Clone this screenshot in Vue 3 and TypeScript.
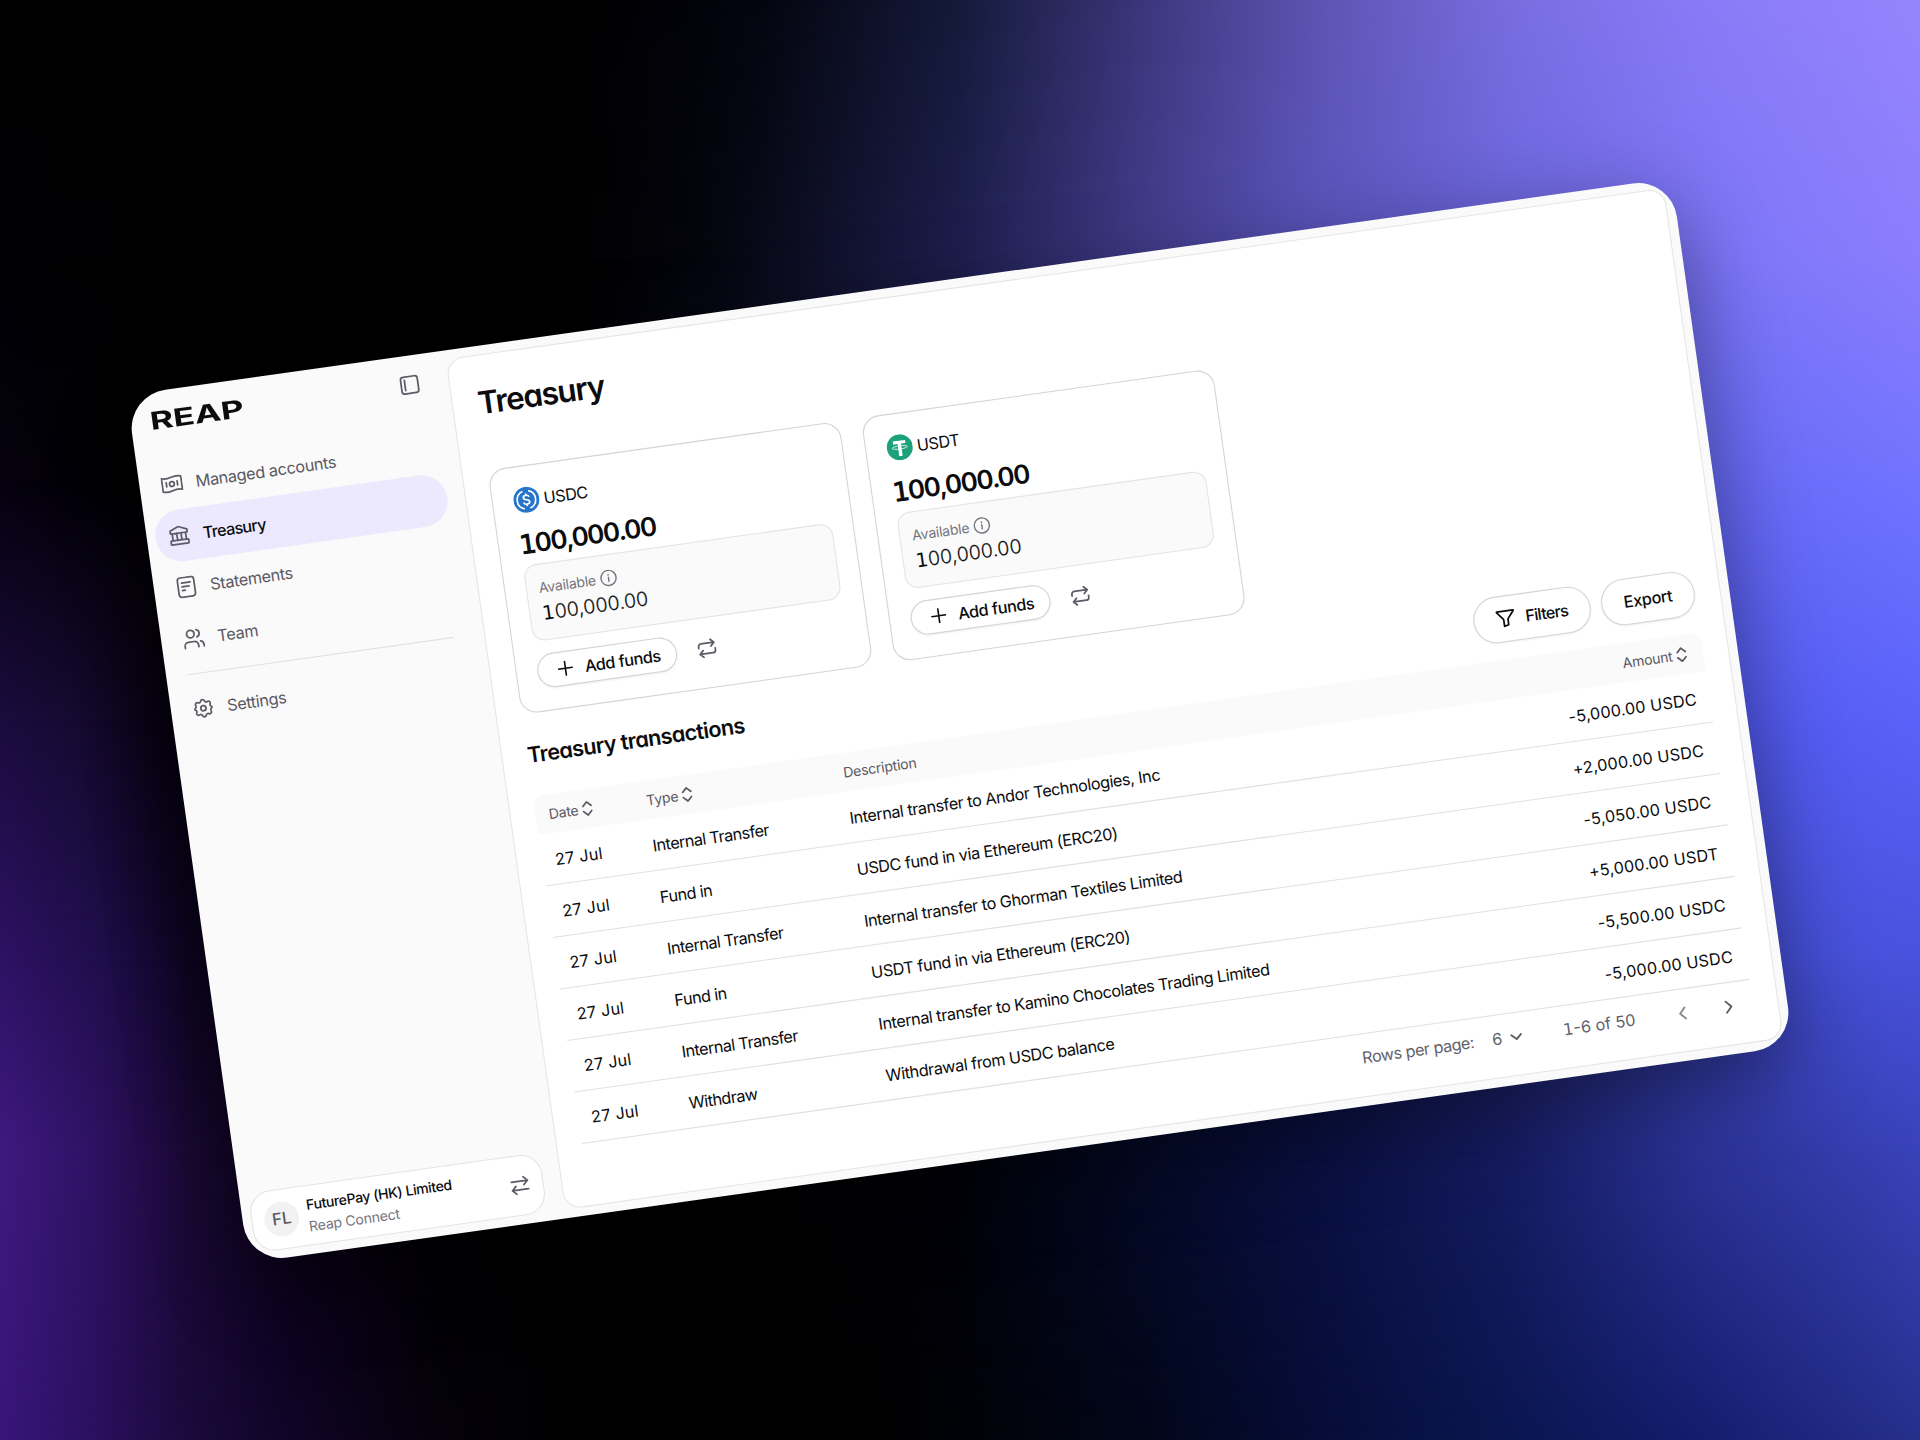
<script setup lang="ts">
interface NavItem {
  label: string
  icon: 'accounts' | 'treasury' | 'statements' | 'team'
  active?: boolean
}

interface Balance {
  code: 'USDC' | 'USDT'
  lead: string
  rest: string
}

interface Transaction {
  date: string
  type: string
  description: string
  amount: string
}

const navItems: NavItem[] = [
  { label: 'Managed accounts', icon: 'accounts' },
  { label: 'Treasury', icon: 'treasury', active: true },
  { label: 'Statements', icon: 'statements' },
  { label: 'Team', icon: 'team' },
]

const balances: Balance[] = [
  { code: 'USDC', lead: '1', rest: '00,000.00' },
  { code: 'USDT', lead: '1', rest: '00,000.00' },
]

const transactions: Transaction[] = [
  { date: '27 Jul', type: 'Internal Transfer', description: 'Internal transfer to Andor Technologies, Inc', amount: '-5,000.00 USDC' },
  { date: '27 Jul', type: 'Fund in', description: 'USDC fund in via Ethereum (ERC20)', amount: '+2,000.00 USDC' },
  { date: '27 Jul', type: 'Internal Transfer', description: 'Internal transfer to Ghorman Textiles Limited', amount: '-5,050.00 USDC' },
  { date: '27 Jul', type: 'Fund in', description: 'USDT fund in via Ethereum (ERC20)', amount: '+5,000.00 USDT' },
  { date: '27 Jul', type: 'Internal Transfer', description: 'Internal transfer to Kamino Chocolates Trading Limited', amount: '-5,500.00 USDC' },
  { date: '27 Jul', type: 'Withdraw', description: 'Withdrawal from USDC balance', amount: '-5,000.00 USDC' },
]
</script>

<template>
  <div class="stage">
    <div class="glow glow-1"></div>
    <div class="glow glow-2"></div>
    <div class="glow glow-3"></div>
    <div class="glow glow-4"></div>
    <div class="glow glow-5"></div>
    <div class="glow glow-6"></div>
    <div class="glow glow-7"></div>

    <div class="window">
      <aside class="sidebar">
        <header class="brand">
          <span class="logo">REAP</span>
          <svg class="icon collapse" viewBox="0 0 20 20">
            <rect x="2.2" y="2.2" width="15.6" height="15.6" rx="2.6" />
            <path d="M5.7 5.2v9.6" />
          </svg>
        </header>

        <nav class="nav">
          <a v-for="item in navItems" :key="item.label" class="nav-item" :class="{ active: item.active }">
            <svg v-if="item.icon === 'accounts'" class="icon" viewBox="0 0 20 20">
              <path d="M1 3.900c3 1.200 6 .8 9-.1s6-1.300 9-.1v12.500c-3-1.200-6-.8-9 .1s-6 1.300-9 .1z" />
              <circle cx="10" cy="10" r="2.200" />
              <path d="M4.900 8.300v3.800M15.100 7.900v3.800" />
            </svg>
            <svg v-else-if="item.icon === 'treasury'" class="icon" viewBox="0 0 20 20">
              <path d="M2.200 5 9.300 2q.7-.2 1.400 0l7.100 3v2.200q0 .6-.6.6H2.800q-.6 0-.6-.6zM3.800 7.800v6.400M8 7.800v6.400M12 7.800v6.400M16.200 7.800v6.400M2.400 14.200h15.200q.6 0 .6.6v2.600q0 .6-.6.6H2.400q-.6 0-.6-.6v-2.600q0-.6.6-.6z" />
            </svg>
            <svg v-else-if="item.icon === 'statements'" class="icon" viewBox="0 0 20 20">
              <rect x="2.400" y="1" width="15.200" height="18" rx="2.800" />
              <path d="M6 5.800h8M6 9.300h6.500M6 12.800h2.600" />
            </svg>
            <svg v-else class="icon" viewBox="0 0 20 20">
              <circle cx="7.500" cy="5.600" r="3.500" />
              <path d="M1.200 18.200v-1.700a3.600 3.600 0 0 1 3.600-3.600h5.400a3.600 3.600 0 0 1 3.600 3.600v1.700M13.200 2.300a3.500 3.500 0 0 1 0 6.700M16 13.100a3.600 3.600 0 0 1 2.800 3.500v1.600" />
            </svg>
            <span>{{ item.label }}</span>
          </a>
          <hr class="divider" />
          <a class="nav-item">
            <svg class="icon" viewBox="0 0 20 20">
              <path d="M8.300 3.300a1.760 1.760 0 0 1 3.400 0 1.760 1.760 0 0 0 2.600 1.100 1.760 1.760 0 0 1 2.400 2.400 1.760 1.760 0 0 0 1.100 2.600 0 0 0 0 1 0 1.300 1.760 1.760 0 0 0-1.100 2.600 1.760 1.760 0 0 1-2.400 2.400 1.760 1.760 0 0 0-2.600 1.100 1.760 1.760 0 0 1-3.400 0 1.760 1.760 0 0 0-2.600-1.100 1.760 1.760 0 0 1-2.400-2.400 1.760 1.760 0 0 0-1.100-2.600V9.400a1.760 1.760 0 0 0 1.100-2.600 1.760 1.760 0 0 1 2.400-2.400 1.760 1.760 0 0 0 2.600-1.100z" />
              <circle cx="10" cy="10" r="2.400" />
            </svg>
            <span>Settings</span>
          </a>
        </nav>

        <div class="account">
          <span class="avatar">FL</span>
          <div class="account-text">
            <span class="account-name">FuturePay (HK) Limited</span>
            <span class="account-sub">Reap Connect</span>
          </div>
          <svg class="icon swap" viewBox="0 0 20 20">
            <path d="M2.500 6h15M13.800 2.300 17.500 6l-3.700 3.700M17.500 14h-15M6.200 10.300 2.500 14l3.700 3.700" />
          </svg>
        </div>
      </aside>

      <main class="content">
        <h1 class="title">Treasury</h1>

        <section class="cards">
          <article v-for="b in balances" :key="b.code" class="card">
            <div class="coin-row">
              <svg v-if="b.code === 'USDC'" class="coin" viewBox="0 0 24 24">
                <circle cx="12" cy="12" r="12" fill="#2775ca" />
                <path d="M9.400 3.900a8.500 8.500 0 0 0 0 16.200M14.600 3.900a8.500 8.500 0 0 1 0 16.200" fill="none" stroke="#fff" stroke-width="1.500" />
                <path d="M14.700 9.700c-.2-1.200-1.200-1.800-2.700-1.800-1.600 0-2.600.8-2.600 1.900 0 2.900 5.400 1.400 5.400 4.300 0 1.200-1.100 2-2.800 2-1.600 0-2.700-.7-2.900-2M12 6v1.900M12 16.100V18" fill="none" stroke="#fff" stroke-width="1.500" />
              </svg>
              <svg v-else class="coin" viewBox="0 0 24 24">
                <circle cx="12" cy="12" r="12" fill="#1ba27a" />
                <path d="M6.300 5.900h11.400v2.900h-4.100v11.300h-3.200V8.800H6.300z" fill="#fff" />
                <ellipse cx="12" cy="12.100" rx="7.100" ry="1.500" fill="none" stroke="#fff" stroke-width=".7" />
              </svg>
              <span class="coin-code">{{ b.code }}</span>
            </div>
            <div class="total"><span class="slab">{{ b.lead }}</span>{{ b.rest }}</div>
            <div class="available">
              <div class="available-label">
                <span>Available</span>
                <svg class="info" viewBox="0 0 16 16">
                  <circle cx="8" cy="8" r="7" />
                  <path d="M8 7.400v3.800M8 4.800v.5" />
                </svg>
              </div>
              <div class="available-value"><span class="slab">{{ b.lead }}</span>{{ b.rest }}</div>
            </div>
            <div class="actions">
              <button class="pill add">
                <svg class="plus" viewBox="0 0 14 14"><path d="M7 .5v13M.5 7h13" /></svg>
                <span>Add funds</span>
              </button>
              <svg class="icon repeat" viewBox="0 0 20 20">
                <path d="M14.300 1.200 17.800 4.700l-3.500 3.500M1.600 9.200V7.500a2.800 2.800 0 0 1 2.800-2.800h13M5.700 18.800l-3.500-3.500 3.500-3.500M18.400 10.800v1.700a2.800 2.800 0 0 1-2.800 2.800h-13" />
              </svg>
            </div>
          </article>
        </section>

        <div class="section-head">
          <h2 class="subtitle">Treasury transactions</h2>
          <div class="tools">
            <button class="pill tool filters">
              <svg class="icon funnel" viewBox="0 0 20 20">
                <path d="M1.800 2.600h16.400q.8 0 .3.700l-6 7.300q-.4.500-.4 1.100v5.400L8 18.200q-.3.100-.3-.3v-6.200q0-.6-.4-1.100l-5.900-7.300q-.5-.7.400-.7z" />
              </svg>
              <span>Filters</span>
            </button>
            <button class="pill tool"><span>Export</span></button>
          </div>
        </div>

        <div class="table">
          <div class="row head">
            <div class="cell date"><span>Date</span>
              <svg class="sort" viewBox="0 0 16 16"><path d="M4.200 5.600 8 1.900l3.800 3.700M4.200 10.400 8 14.100l3.800-3.700" /></svg>
            </div>
            <div class="cell type"><span>Type</span>
              <svg class="sort" viewBox="0 0 16 16"><path d="M4.200 5.600 8 1.900l3.800 3.700M4.200 10.400 8 14.100l3.800-3.700" /></svg>
            </div>
            <div class="cell description"><span>Description</span></div>
            <div class="cell amount"><span>Amount</span>
              <svg class="sort" viewBox="0 0 16 16"><path d="M4.200 5.600 8 1.900l3.800 3.700M4.200 10.400 8 14.100l3.800-3.700" /></svg>
            </div>
          </div>
          <div v-for="(t, i) in transactions" :key="i" class="row body-row">
            <div class="cell date">{{ t.date }}</div>
            <div class="cell type">{{ t.type }}</div>
            <div class="cell description">{{ t.description }}</div>
            <div class="cell amount">{{ t.amount }}</div>
          </div>
        </div>

        <footer class="pager">
          <span class="rows-label">Rows per page:</span>
          <span class="rows-value">6</span>
          <svg class="chev down" viewBox="0 0 16 16"><path d="M3.500 6 8 10.200 12.500 6" /></svg>
          <span class="range"><span class="slab">1</span>-6 of 50</span>
          <svg class="chev prev" viewBox="0 0 16 16"><path d="M10.400 2.800 5.600 8l4.800 5.200" /></svg>
          <svg class="chev next" viewBox="0 0 16 16"><path d="M5.600 2.800 10.400 8l-4.800 5.200" /></svg>
        </footer>
      </main>
    </div>
  </div>
</template>

<style>
body {
  background: #000;
}
</style>

<style scoped>
.stage {
  position: relative;
  width: 1920px;
  height: 1440px;
  overflow: hidden;
  display: flex;
  align-items: center;
  justify-content: center;
  background: #000;
  font-family: Inter, 'Liberation Sans', sans-serif;
}

/* Horizontal colour bands that fade into one another from top to bottom. */
.glow {
  position: absolute;
  left: 0;
  right: 0;
  bottom: 0;
}

.glow-1 {
  top: 0;
  background: linear-gradient(90deg, #000 0, #000 560px, #04050f 760px, #151a3a 960px, #3c367c 1144px, #5f55b4 1327px, #786de0 1511px, #897af6 1695px, #9685fc 1920px);
}

.glow-2 {
  top: 0;
  background: linear-gradient(90deg, #010004 0, #000 200px, #000 560px, #05060f 720px, #1e1e4e 960px, #423c8a 1144px, #5853ba 1300px, #6b66de 1511px, #7c76f8 1725px, #8b7dfd 1920px);
  mask-image: linear-gradient(180deg, transparent 0, #000 260px);
}

.glow-3 {
  top: 260px;
  background: linear-gradient(90deg, #05010e 0, #000 140px, #000 560px, #1c1c4e 960px, #4f4db8 1400px, #6669f4 1700px, #7174ff 1920px);
  mask-image: linear-gradient(180deg, transparent 0, #000 220px);
}

.glow-4 {
  top: 480px;
  background: linear-gradient(90deg, #1b0b3e 0, #150a30 80px, #070210 160px, #000 240px, #000 900px, #20246a 1300px, #535af0 1750px, #5a62fa 1920px);
  mask-image: linear-gradient(180deg, transparent 0, #000 240px);
}

.glow-5 {
  top: 720px;
  background: linear-gradient(90deg, #2d1264 0, #200e4c 100px, #0d0420 190px, #000 300px, #000 900px, #0c1240 1300px, #2e368e 1600px, #4650d8 1793px, #4852dc 1920px);
  mask-image: linear-gradient(180deg, transparent 0, #000 240px);
}

.glow-6 {
  top: 960px;
  background: linear-gradient(90deg, #3f1980 0, #2e1264 92px, #190832 190px, #080112 300px, #000 450px, #000 700px, #01020a 960px, #050a28 1144px, #0a1144 1327px, #161c62 1511px, #2a3294 1695px, #3a42ba 1920px);
  mask-image: linear-gradient(180deg, transparent 0, #000 190px);
}

.glow-7 {
  top: 1150px;
  background: linear-gradient(90deg, #38157a 0, #2a1060 92px, #1b0a3c 184px, #12042a 275px, #05010c 430px, #000 560px, #000 860px, #010207 960px, #020619 1144px, #060d38 1327px, #0a1650 1511px, #131c6c 1695px, #26308c 1920px);
  mask-image: linear-gradient(180deg, transparent 0, #000 290px);
}

.window {
  position: relative;
  box-sizing: border-box;
  width: 1440px;
  height: 808.600px;
  flex: none;
  display: flex;
  padding: 8px;
  border-radius: 36px;
  background: #fafafa;
  color: #0c0c0e;
  transform: rotate(-8deg) scale(1.08333);
  box-shadow: 0 26px 80px rgba(0, 0, 0, 0.42);
}

.icon {
  width: 20px;
  height: 20px;
  flex: none;
  fill: none;
  stroke: #5c5b66;
  stroke-width: 1.6;
  stroke-linecap: round;
  stroke-linejoin: round;
}

.sidebar {
  width: 272px;
  margin-right: 16px;
  display: flex;
  flex-direction: column;
}

.brand {
  height: 55px;
  display: flex;
  align-items: flex-start;
  justify-content: space-between;
  padding: 0 10px 0 10px;
}

.logo {
  font-size: 22.500px;
  line-height: 22px;
  font-weight: 700;
  margin-top: 8px;
  transform: scaleX(1.46);
  transform-origin: left;
}

.collapse {
  margin-top: 9px;
}

.nav-item {
  height: 48px;
  display: flex;
  align-items: center;
  gap: 12px;
  padding: 0 12px;
  border-radius: 24px;
  font-size: 15px;
  letter-spacing: -0.3px;
  color: #5a5963;
}

.nav-item span {
  padding-top: 1px;
}

.nav-item.active {
  background: #ece9fe;
  color: #0c0c0e;
  font-weight: 500;
  letter-spacing: -0.650px;
}

.divider {
  height: 1px;
  margin: 8px 12px;
  border: 0;
  background: #e0e0e3;
}

.account {
  box-sizing: border-box;
  height: 56px;
  margin-top: auto;
  display: flex;
  align-items: center;
  padding: 0 11px;
  border: 1px solid #e4e4e7;
  border-radius: 20px;
  background: #fff;
}

.avatar {
  width: 32px;
  height: 32px;
  border-radius: 50%;
  background: #f2f2f3;
  display: flex;
  align-items: center;
  justify-content: center;
  font-size: 15.500px;
  font-weight: 500;
  color: #5a5963;
}

.account-text {
  margin-left: 8px;
  display: flex;
  flex-direction: column;
}

.account-name {
  font-size: 13px;
  line-height: 20px;
  font-weight: 500;
  letter-spacing: -0.35px;
}

.account-sub {
  font-size: 13px;
  line-height: 20px;
  letter-spacing: -0.2px;
  color: #75747e;
}

.swap {
  width: 20px;
  height: 20px;
  margin-left: auto;
}

.content {
  box-sizing: border-box;
  flex: 1;
  border: 1px solid #e6e6e8;
  border-radius: 16px;
  background: #fff;
  padding: 0 23px;
  display: flex;
  flex-direction: column;
}

.title,
.subtitle {
  margin: 0;
  font-weight: 600;
  font-feature-settings: 'cv11';
}

.title {
  margin-top: 24px;
  height: 82.300px;
  font-size: 29px;
  line-height: 40px;
  letter-spacing: -1.1px;
}

.cards {
  display: flex;
  gap: 20px;
}

.card {
  box-sizing: border-box;
  width: 328px;
  height: 227.700px;
  padding: 19px 19px 0;
  border: 1px solid #d4d4d8;
  border-radius: 16px;
}

.coin-row {
  display: flex;
  align-items: center;
  gap: 4px;
  height: 24px;
}

.coin {
  width: 24px;
  height: 24px;
}

.coin-code {
  font-size: 15px;
  letter-spacing: -0.4px;
}

.slab {
  font-family: 'DejaVu Sans', sans-serif;
}

.total {
  height: 48px;
  line-height: 57px;
  font-size: 24px;
  font-weight: 600;
  letter-spacing: -1.2px;
}

.total .slab {
  font-size: 24px;
  font-weight: 400;
  -webkit-text-stroke: 0.9px currentColor;
}

.available {
  box-sizing: border-box;
  height: 71px;
  padding: 11px;
  border: 1px solid #e4e4e7;
  border-radius: 12px;
  background: #fafafa;
}

.available-label {
  display: flex;
  align-items: center;
  gap: 4px;
  height: 20px;
  font-size: 13px;
  letter-spacing: -0.2px;
  color: #75747e;
}

.info {
  width: 16px;
  height: 16px;
  fill: none;
  stroke: #75747e;
  stroke-width: 1.300;
  stroke-linecap: round;
}

.available-value {
  height: 28px;
  line-height: 28px;
  font-size: 18px;
  font-weight: 300;
  letter-spacing: 0.1px;
  -webkit-text-stroke: 0.15px currentColor;
}

.available-value .slab {
  font-size: 18px;
  font-weight: 400;
  -webkit-text-stroke: 0;
}

.actions {
  display: flex;
  align-items: center;
  margin-top: 12px;
}

.pill {
  box-sizing: border-box;
  display: flex;
  align-items: center;
  border: 1px solid #d4d4d8;
  border-radius: 22px;
  background: #fff;
  box-shadow: 0 1px 2px rgba(0, 0, 0, 0.06);
  font-family: inherit;
  font-size: 15px;
  font-weight: 500;
  letter-spacing: -0.4px;
  color: #0c0c0e;
}

.pill span {
  padding-top: 1px;
}

.add {
  width: 130px;
  height: 32px;
  padding: 0 0 0 18px;
  gap: 11px;
}

.plus {
  width: 14px;
  height: 14px;
  fill: none;
  stroke: currentColor;
  stroke-width: 1.500;
  stroke-linecap: round;
}

.repeat {
  width: 18px;
  height: 18px;
  margin-left: 19px;
  stroke-width: 1.800;
}

.section-head {
  display: flex;
  align-items: center;
  justify-content: space-between;
  height: 43px;
  margin-top: 17px;
}

.subtitle {
  font-size: 20px;
  line-height: 28px;
  letter-spacing: -0.570px;
}

.tools {
  display: flex;
  gap: 10px;
}

.tool {
  height: 43px;
  padding: 0 20px;
}

.tool:last-child {
  letter-spacing: -0.3px;
}

.filters {
  gap: 9.500px;
  padding-right: 20px;
  letter-spacing: -0.650px;
}

.funnel {
  width: 18px;
  height: 18px;
  stroke: #0c0c0e;
  stroke-width: 1.800;
}

.table {
  margin-top: 16px;
}

.row {
  box-sizing: border-box;
  display: flex;
  align-items: center;
  height: 48px;
  padding: 0 12px;
  border-bottom: 1px solid #e0e0e3;
  font-size: 15px;
  letter-spacing: -0.4px;
}

.body-row .cell {
  padding-top: 2px;
}

.body-row .date {
  letter-spacing: 0.2px;
}

.body-row .type {
  letter-spacing: -0.5px;
}

.body-row .amount {
  letter-spacing: 0.150px;
}

.row.head {
  height: 36px;
  border-bottom: 0;
  border-radius: 8px 8px 0 0;
  background: #fafafa;
  font-size: 13px;
  letter-spacing: -0.2px;
  color: #5a5963;
}

.cell {
  display: flex;
  align-items: center;
  white-space: nowrap;
}

.date {
  width: 91px;
}

.type {
  width: 183.500px;
}

.description {
  flex: 1;
}

.amount {
  justify-content: flex-end;
}

.sort {
  width: 16px;
  height: 16px;
  margin-left: 0.500px;
  fill: none;
  stroke: #5a5963;
  stroke-width: 1.600;
  stroke-linecap: round;
  stroke-linejoin: round;
}

.pager {
  display: flex;
  align-items: center;
  justify-content: flex-end;
  height: 44px;
  font-size: 15px;
  color: #63626c;
}

.rows-label {
  letter-spacing: -0.450px;
}

.rows-value {
  margin-left: 17px;
}

.chev {
  width: 16px;
  height: 16px;
  fill: none;
  stroke: #5a5963;
  stroke-width: 1.700;
  stroke-linecap: round;
  stroke-linejoin: round;
}

.down {
  margin-left: 5px;
}

.range {
  margin-left: 36px;
}

.range .slab {
  font-size: 15px;
}

.prev {
  margin-left: 36px;
  stroke: #8a8992;
}

.next {
  margin-left: 27px;
  margin-right: 14px;
}
</style>
